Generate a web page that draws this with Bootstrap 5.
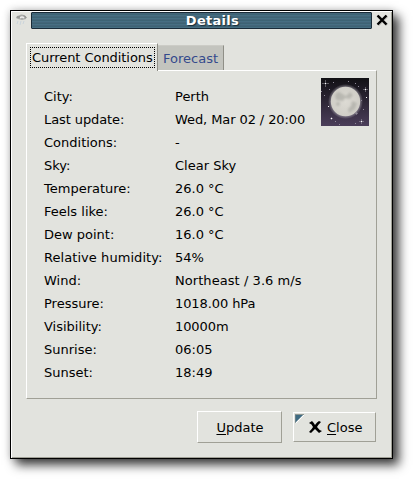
<!DOCTYPE html>
<html lang="en">
<head>
<meta charset="utf-8">
<title>Details</title>
<meta name="viewport" content="width=device-width, initial-scale=1">
<link href="https://cdn.jsdelivr.net/npm/bootstrap@5.3.0/dist/css/bootstrap.min.css" rel="stylesheet">
<style>
body{font:13px/23px "DejaVu Sans",sans-serif;color:#000;background:#fff;padding:10px 0 0 10px;height:479px}
.dialog{width:383px;height:449px;background:#e2e3de;border:1px solid #000;
 box-shadow:inset 1px 1px #fff,inset -1px -1px #a0a096,6px 6px 10px rgba(0,0,0,.75),0 0 8px rgba(0,0,0,.2)}
.titlebar{height:19px;padding:1px 1px 0 1px}
.title-icon{width:19px;height:17px}
.title-text{width:341px;height:17px;border:1px solid #192b38;border-radius:1px;color:#fff;font-weight:700;line-height:16px;letter-spacing:.3px;padding-left:22px;
 text-shadow:1px 1px 1px #182c38;background:repeating-linear-gradient(#436579 0 1px,#3d6374 1px 2px,#466e82 2px 3px)}
.title-close{width:19px;height:17px}
.content{padding:13px 15px 0}
.tab-on{width:132px;height:28px;border-left:1px solid #fff;border-top:1px solid #fff;border-right:1px solid #8f8f87;background:#e2e3de;padding:3px 2px 0 3px;margin-bottom:-1px;z-index:1}
.tab-focus{height:21px;border:1px dotted #000;line-height:19px;padding-left:1px;white-space:nowrap;letter-spacing:-.06px}
.tab-off{width:66px;height:25px;border-top:1px solid #ccccc6;border-right:1px solid #8f8f87;background:#c3c4be;color:#344a8c;padding-left:5px;line-height:26px}
.sheet{height:329px;border:1px solid;border-color:#fff #a0a096 #a0a096 #fff;padding:14px 7px 0 17px}
.data-label{width:131px}
.data-row{height:23px;white-space:nowrap}
.snug{letter-spacing:-.09px}
.loose{letter-spacing:.06px}
.moon{width:48px;height:48px;margin-top:-7px}
.actions{padding:12px 1px 0 0;gap:11px}
.dlg-btn{border:1px solid;border-color:#fff #a0a096 #a0a096 #fff;border-radius:0;background:#e2e3de;color:#000;font:inherit;padding:0}
.dlg-btn u{text-decoration-thickness:1px;text-underline-offset:2px}
.btn-update{width:85px;height:32px;padding-left:1px}
.btn-close-dlg{width:83px;height:30px;margin-top:1px}
.corner{left:1px;top:1px}
.close-x{margin-left:15px}
.close-label{padding-left:5px}
</style>
</head>
<body>
<main class="dialog">
 <header class="titlebar d-flex">
  <svg class="title-icon" viewBox="0 0 19 17"><path d="M4 6Q4 4 7 3.500Q9 2 12 3Q15 4 14 7L10 8L6 7Z" fill="#a9aaa8"/><path d="M8 6Q10 4 12 6" stroke="#eee" stroke-width="1.200" fill="none"/><path d="M5 5H8M12 3.500L14.500 6" stroke="#858784" fill="none"/><path d="M6 9L5 12M9 9L8 13M12 9L11 12" stroke="#cbd5dc"/></svg>
  <div class="title-text text-center">Details</div>
  <svg class="title-close" viewBox="0 0 19 17"><path d="M6 4L15 13M15 4L6 13" stroke="#b9bab5" stroke-width="3"/><path d="M5.500 3.500L14.500 12.500M14.500 3.500L5.500 12.500" stroke="#000" stroke-width="2.400"/></svg>
 </header>
 <div class="content">
  <div class="d-flex align-items-end">
   <div class="tab-on position-relative"><div class="tab-focus">Current Conditions</div></div>
   <div class="tab-off">Forecast</div>
  </div>
  <section class="sheet d-flex justify-content-between">
   <div>
    <div class="data-row d-flex"><div class="data-label">City:</div><div>Perth</div></div>
    <div class="data-row d-flex"><div class="data-label snug">Last update:</div><div class="snug">Wed, Mar 02 / 20:00</div></div>
    <div class="data-row d-flex"><div class="data-label">Conditions:</div><div>-</div></div>
    <div class="data-row d-flex"><div class="data-label">Sky:</div><div>Clear Sky</div></div>
    <div class="data-row d-flex"><div class="data-label">Temperature:</div><div>26.0 °C</div></div>
    <div class="data-row d-flex"><div class="data-label">Feels like:</div><div>26.0 °C</div></div>
    <div class="data-row d-flex"><div class="data-label">Dew point:</div><div>16.0 °C</div></div>
    <div class="data-row d-flex"><div class="data-label loose">Relative humidity:</div><div>54%</div></div>
    <div class="data-row d-flex"><div class="data-label">Wind:</div><div class="loose">Northeast / 3.6 m/s</div></div>
    <div class="data-row d-flex"><div class="data-label">Pressure:</div><div class="snug">1018.00 hPa</div></div>
    <div class="data-row d-flex"><div class="data-label">Visibility:</div><div class="snug">10000m</div></div>
    <div class="data-row d-flex"><div class="data-label">Sunrise:</div><div>06:05</div></div>
    <div class="data-row d-flex"><div class="data-label">Sunset:</div><div>18:49</div></div>
   </div>
   <svg class="moon flex-shrink-0" viewBox="0 0 48 48">
    <defs>
     <linearGradient id="night" x2="0" y2="1"><stop stop-color="#111014"/><stop offset="1" stop-color="#4b3e5a"/></linearGradient>
     <radialGradient id="glow"><stop offset=".8" stop-color="#b9b5bd" stop-opacity=".6"/><stop offset="1" stop-color="#b9b5bd" stop-opacity="0"/></radialGradient>
     <radialGradient id="disc"><stop stop-color="#dddbd4"/><stop offset="1" stop-color="#d0cec7"/></radialGradient>
     <filter id="soft"><feGaussianBlur stdDeviation="1.2"/></filter>
    </defs>
    <rect width="48" height="48" fill="url(#night)"/>
    <circle cx="24.500" cy="23.500" r="17.500" fill="url(#glow)"/>
    <circle cx="24.500" cy="23.500" r="14.700" fill="url(#disc)"/>
    <g fill="#a5a59f" filter="url(#soft)" opacity=".6"><path d="M14 17Q17 12 20 15L25 18L29 14L32 17L29 21L24 20L22 23L15 22Z"/><path d="M31 23L36 25L34 31L28 35L27 31L30 28Z"/><circle cx="17" cy="26" r="2"/></g>
    <g stroke="#aaa6b0" stroke-width=".6" opacity=".8"><path d="M4.500 2V9M1 5.500H8M44.500 9V14M42 11.500H47M40.500 41V46M38 43.500H43M10.500 39V42M9 40.500H12M35.500 34V37M34 35.500H37"/></g>
    <g fill="#fff"><path d="M4 5h1v1H4zM44 11h1v1h-1zM40 43h1v1h-1zM10 40h1v1h-1zM45 19h1v1h-1zM7 28h1v1H7z"/></g>
    <g fill="#8f8998"><path d="M12 4h1v1h-1zM34 5h1v1h-1zM27 3h1v1h-1zM3 17h1v1H3zM0 13h1v1H0zM8 11h1v1H8zM42 31h1v1h-1zM14 43h1v1h-1zM18 46h1v1h-1zM34 45h1v1h-1zM40 22h1v1h-1zM37 8h1v1h-1z"/></g>
   </svg>
  </section>
  <footer class="actions d-flex justify-content-end">
   <button class="btn dlg-btn btn-update"><u>U</u>pdate</button>
   <button class="btn dlg-btn btn-close-dlg position-relative d-flex align-items-center"><svg class="corner position-absolute" width="9" height="9"><path d="M0 0H9L0 9Z" fill="#3f6b82"/><path d="M0 9V.5H9" fill="none" stroke="#8d9692"/><path d="M9 1L1 9" stroke="#fff"/></svg><svg class="close-x" width="13" height="13" viewBox="0 0 13 13"><path d="M0 2L3 0Q5 2 6 4Q8 1 10 0L12 1Q9 4 8 6Q10 9 13 10L10 12Q8 10 6 8Q4 10 2 12L0 11Q3 8 4 6Q3 3 0 2Z"/></svg><span class="close-label"><u>C</u>lose</span></button>
  </footer>
 </div>
</main>
<script src="https://cdn.jsdelivr.net/npm/bootstrap@5.3.0/dist/js/bootstrap.bundle.min.js"></script>
</body>
</html>
